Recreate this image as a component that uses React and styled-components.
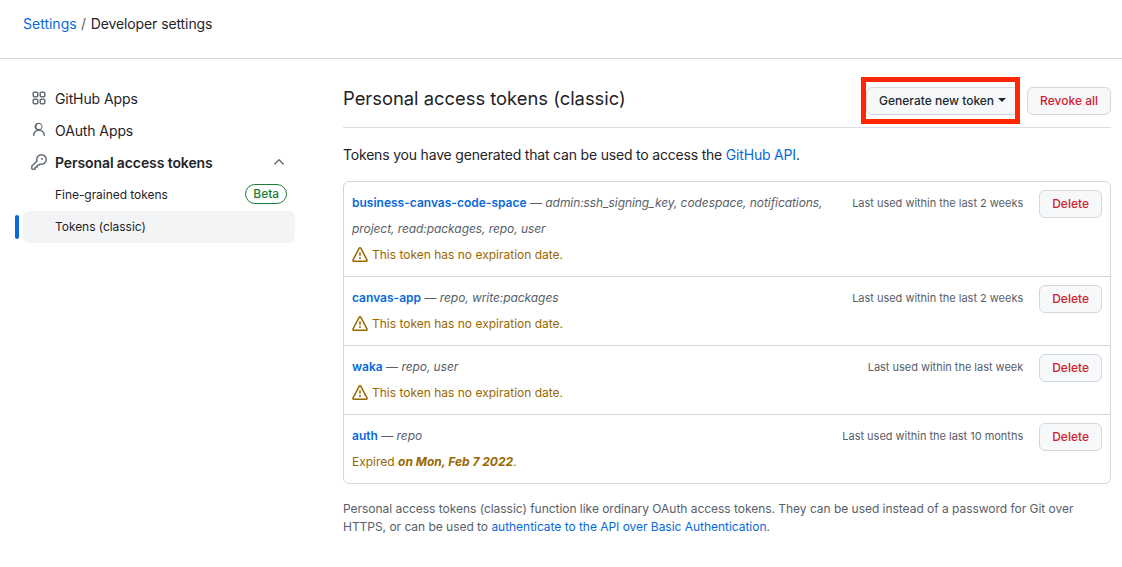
import React from "react";
import styled, { createGlobalStyle } from "styled-components";

const GlobalStyle = createGlobalStyle`
  html, body {
    margin: 0;
    background: #fff;
    color: #1f2328;
    font-family: Inter, "Noto Sans", sans-serif;
    font-size: 12px;
  }
  * {
    box-sizing: border-box;
  }
`;

const TopBar = styled.header`
  height: 59px;
  border-bottom: 1px solid #d0d7de;
  padding: 14px 23px 0;
  font-size: 14px;
  line-height: 20px;
  display: flex;
  gap: 4.5px;
`;

const Crumb = styled.span`
  color: ${(p) => (p.$link ? "#0969da" : "#1f2328")};
  letter-spacing: ${(p) => (p.$link ? "0" : "-0.1px")};
`;

const Slash = styled.span`
  color: #57606a;
`;

const Layout = styled.div`
  display: grid;
  grid-template-columns: 272px 768px;
  column-gap: 48px;
  padding: 24px 0 0 23px;
`;

const Sidebar = styled.nav`
  display: flex;
  flex-direction: column;
`;

const NavItem = styled.div`
  position: relative;
  height: 32px;
  display: flex;
  align-items: center;
  gap: 8px;
  padding: 0 8px 2px;
  border-radius: 6px;
  font-size: ${(p) => (p.$sub ? "12px" : "14px")};
  font-weight: ${(p) => (p.$bold ? 600 : 400)};
  letter-spacing: ${(p) => (p.$sub ? "-0.05px" : "-0.1px")};
  padding-left: ${(p) => (p.$sub ? "32px" : "8px")};
  background: ${(p) => (p.$active ? "#f3f4f6" : "transparent")};
  svg {
    color: #656d76;
    flex: none;
  }
`;

const ActiveMark = styled.span`
  position: absolute;
  left: -8px;
  top: 4px;
  width: 4px;
  height: 24px;
  border-radius: 6px;
  background: #0969da;
`;

const Push = styled.span`
  margin-left: auto;
  display: flex;
`;

const Label = styled.span`
  border: 1px solid #1a7f37;
  border-radius: 10px;
  color: #1a7f37;
  font-size: 12px;
  font-weight: 500;
  line-height: 18px;
  padding: 0 7px;
`;

const Main = styled.main`
  display: flex;
  flex-direction: column;
`;

const Head = styled.div`
  height: 45px;
  display: flex;
  align-items: flex-start;
  justify-content: space-between;
  border-bottom: 1px solid #d8dee4;
`;

const Title = styled.h2`
  margin: 0;
  font-size: 18.36px;
  line-height: 30px;
  font-weight: 400;
`;

const Actions = styled.div`
  display: flex;
  gap: 8px;
  padding-top: 4px;
`;

const Highlight = styled.div`
  position: relative;
  display: flex;
`;

const RedFrame = styled.span`
  position: absolute;
  left: -5px;
  right: -1px;
  top: -10px;
  bottom: -9px;
  border: 5px solid #ff2600;
  pointer-events: none;
`;

const Button = styled.button`
  height: 28px;
  padding: 0 12px 2px;
  border: 1px solid #d0d7de;
  border-radius: 6px;
  background: #f6f8fa;
  color: ${(p) => (p.$danger ? "#cf222e" : "#24292f")};
  font-family: inherit;
  font-size: 12px;
  font-weight: 500;
  white-space: nowrap;
  display: inline-flex;
  align-items: center;
  flex: none;
`;

const Caret = styled.span`
  margin-left: 4px;
  border-top: 4px solid currentColor;
  border-left: 4px solid transparent;
  border-right: 4px solid transparent;
`;

const Intro = styled.p`
  margin: 16px 0;
  font-size: 14px;
  line-height: 21px;
  letter-spacing: -0.19px;
`;

const Link = styled.a`
  color: #0969da;
  font-weight: ${(p) => (p.$bold ? 600 : 400)};
`;

const TokenBox = styled.div`
  border: 1px solid #d0d7de;
  border-radius: 6px;
`;

const TokenRow = styled.div`
  display: flex;
  align-items: flex-start;
  gap: 16px;
  padding: 8px;
  line-height: 26px;
  & + & {
    border-top: 1px solid #d0d7de;
  }
`;

const TokenInfo = styled.div`
  flex: 1;
  min-width: 0;
`;

const NameLine = styled.div`
  display: flex;
  gap: 16px;
  align-items: flex-start;
  justify-content: space-between;
`;

const Scopes = styled.em`
  color: #57606a;
  letter-spacing: -0.07px;
`;

const Dash = styled.span`
  color: #57606a;
`;

const LastUsed = styled.span`
  color: #57606a;
  font-size: 11px;
  letter-spacing: -0.02px;
  white-space: nowrap;
  flex: none;
`;

const Warning = styled.div`
  color: #9a6700;
  display: flex;
  align-items: center;
  gap: 4px;
  svg {
    flex: none;
  }
`;

const Footnote = styled.p`
  margin: 16px 0 0;
  color: #57606a;
  line-height: 18px;
  letter-spacing: -0.03px;
`;

const Octicon = ({ d }) => (
  <svg width="16" height="16" viewBox="0 0 16 16" fill="currentColor" fillRule="evenodd">
    <path d={d} />
  </svg>
);

const icons = {
  apps: "M1.5 3.25c0-.966.784-1.75 1.75-1.75h2.5c.966 0 1.75.784 1.75 1.75v2.5A1.75 1.75 0 0 1 5.75 7.5h-2.5A1.75 1.75 0 0 1 1.5 5.75Zm7 0c0-.966.784-1.75 1.75-1.75h2.5c.966 0 1.75.784 1.75 1.75v2.5a1.75 1.75 0 0 1-1.75 1.75h-2.5A1.75 1.75 0 0 1 8.5 5.75Zm-7 7c0-.966.784-1.75 1.75-1.75h2.5c.966 0 1.75.784 1.75 1.75v2.5a1.75 1.75 0 0 1-1.75 1.75h-2.5a1.75 1.75 0 0 1-1.75-1.75Zm7 0c0-.966.784-1.75 1.75-1.75h2.5c.966 0 1.75.784 1.75 1.75v2.5a1.75 1.75 0 0 1-1.75 1.75h-2.5a1.75 1.75 0 0 1-1.75-1.75ZM3.25 3a.25.25 0 0 0-.25.25v2.5c0 .138.112.25.25.25h2.5A.25.25 0 0 0 6 5.75v-2.5A.25.25 0 0 0 5.75 3Zm7 0a.25.25 0 0 0-.25.25v2.5c0 .138.112.25.25.25h2.5a.25.25 0 0 0 .25-.25v-2.5a.25.25 0 0 0-.25-.25Zm-7 7a.25.25 0 0 0-.25.25v2.5c0 .138.112.25.25.25h2.5a.25.25 0 0 0 .25-.25v-2.5a.25.25 0 0 0-.25-.25Zm7 0a.25.25 0 0 0-.25.25v2.5c0 .138.112.25.25.25h2.5a.25.25 0 0 0 .25-.25v-2.5a.25.25 0 0 0-.25-.25Z",
  person: "M10.561 8.073a6.005 6.005 0 0 1 3.432 5.142.75.75 0 1 1-1.498.07 4.5 4.5 0 0 0-8.99 0 .75.75 0 1 1-1.498-.07 6.004 6.004 0 0 1 3.431-5.142 3.999 3.999 0 1 1 4.123 0ZM10.5 4.5a2.5 2.5 0 1 0-5 0 2.5 2.5 0 0 0 5 0Z",
  key: "M10.5 0a5.499 5.499 0 1 1-1.288 10.848l-.932.932a.749.749 0 0 1-.53.22H7v.75a.749.749 0 0 1-.22.53l-.5.5a.749.749 0 0 1-.53.22H5v.75a.749.749 0 0 1-.22.53l-.5.5a.749.749 0 0 1-.53.22h-2A1.75 1.75 0 0 1 0 14.25v-2c0-.199.079-.389.22-.53l4.932-4.932A5.5 5.5 0 0 1 10.5 0Zm-4 5.5c-.001.431.069.86.205 1.269a.75.75 0 0 1-.181.768L1.5 12.56v1.69c0 .138.112.25.25.25h1.69l.06-.06v-1.19a.75.75 0 0 1 .75-.75h1.19l.06-.06v-1.19a.75.75 0 0 1 .75-.75h1.19l1.023-1.025a.75.75 0 0 1 .768-.18A4 4 0 1 0 6.5 5.5ZM11 6a1 1 0 1 1 0-2 1 1 0 0 1 0 2Z",
  chevronUp: "M3.22 10.53a.749.749 0 0 1 0-1.06l4.25-4.25a.749.749 0 0 1 1.06 0l4.25 4.25a.749.749 0 1 1-1.06 1.06L8 6.81l-3.72 3.72a.749.749 0 0 1-1.06 0Z",
  alert: "M6.457 1.047c.659-1.234 2.427-1.234 3.086 0l6.082 11.378A1.75 1.75 0 0 1 14.082 15H1.918a1.75 1.75 0 0 1-1.543-2.575Zm1.763.707a.25.25 0 0 0-.44 0L1.698 13.132a.25.25 0 0 0 .22.368h12.164a.25.25 0 0 0 .22-.368Zm.53 3.996v2.5a.75.75 0 0 1-1.5 0v-2.5a.75.75 0 0 1 1.5 0ZM9 11a1 1 0 1 1-2 0 1 1 0 0 1 2 0Z",
};

const tokens = [
  {
    name: "business-canvas-code-space",
    scopes: "admin:ssh_signing_key, codespace, notifications, project, read:packages, repo, user",
    used: "Last used within the last 2 weeks",
  },
  { name: "canvas-app", scopes: "repo, write:packages", used: "Last used within the last 2 weeks" },
  { name: "waka", scopes: "repo, user", used: "Last used within the last week" },
  { name: "auth", scopes: "repo", used: "Last used within the last 10 months", expired: true },
];

const App = () => {
  return (
    <>
      <GlobalStyle />
      <TopBar>
        <Crumb $link>Settings</Crumb>
        <Slash>/</Slash>
        <Crumb>Developer settings</Crumb>
      </TopBar>
      <Layout>
        <Sidebar>
          <NavItem>
            <Octicon d={icons.apps} />
            GitHub Apps
          </NavItem>
          <NavItem>
            <Octicon d={icons.person} />
            OAuth Apps
          </NavItem>
          <NavItem $bold>
            <Octicon d={icons.key} />
            Personal access tokens
            <Push>
              <Octicon d={icons.chevronUp} />
            </Push>
          </NavItem>
          <NavItem $sub>
            Fine-grained tokens
            <Push>
              <Label>Beta</Label>
            </Push>
          </NavItem>
          <NavItem $sub $active>
            <ActiveMark />
            Tokens (classic)
          </NavItem>
        </Sidebar>
        <Main>
          <Head>
            <Title>Personal access tokens (classic)</Title>
            <Actions>
              <Highlight>
                <Button>
                  Generate new token
                  <Caret />
                </Button>
                <RedFrame />
              </Highlight>
              <Button $danger>Revoke all</Button>
            </Actions>
          </Head>
          <Intro>
            Tokens you have generated that can be used to access the <Link>GitHub API</Link>.
          </Intro>
          <TokenBox>
            {tokens.map((token) => (
              <TokenRow key={token.name}>
                <TokenInfo>
                  <NameLine>
                    <div>
                      <Link $bold>{token.name}</Link> <Dash>—</Dash> <Scopes>{token.scopes}</Scopes>
                    </div>
                    <LastUsed>{token.used}</LastUsed>
                  </NameLine>
                  {token.expired ? (
                    <Warning>
                      <span>
                        Expired <em><b>on Mon, Feb 7 2022</b></em>.
                      </span>
                    </Warning>
                  ) : (
                    <Warning>
                      <Octicon d={icons.alert} />
                      This token has no expiration date.
                    </Warning>
                  )}
                </TokenInfo>
                <Button $danger>Delete</Button>
              </TokenRow>
            ))}
          </TokenBox>
          <Footnote>
            Personal access tokens (classic) function like ordinary OAuth access tokens. They can be used instead of a
            password for Git over HTTPS, or can be used to <Link>authenticate to the API over Basic Authentication</Link>.
          </Footnote>
        </Main>
      </Layout>
    </>
  );
};

export default App;
